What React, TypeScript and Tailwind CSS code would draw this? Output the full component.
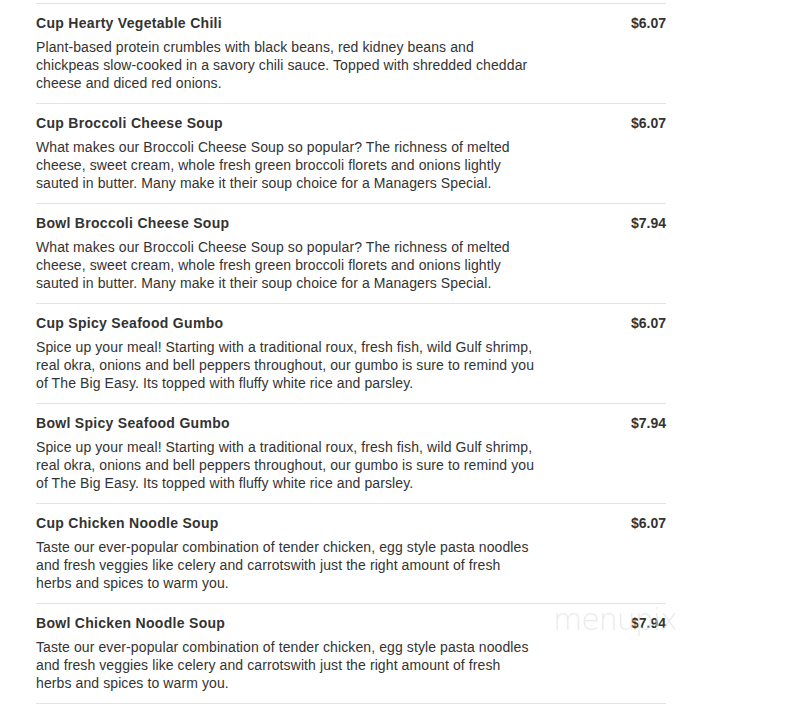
const items = [
    {
        name: "Cup Hearty Vegetable Chili",
        price: "$6.07",
        lines: [
            "Plant-based protein crumbles with black beans, red kidney beans and",
            "chickpeas slow-cooked in a savory chili sauce. Topped with shredded cheddar",
            "cheese and diced red onions.",
        ],
    },
    {
        name: "Cup Broccoli Cheese Soup",
        price: "$6.07",
        lines: [
            "What makes our Broccoli Cheese Soup so popular? The richness of melted",
            "cheese, sweet cream, whole fresh green broccoli florets and onions lightly",
            "sauted in butter. Many make it their soup choice for a Managers Special.",
        ],
    },
    {
        name: "Bowl Broccoli Cheese Soup",
        price: "$7.94",
        lines: [
            "What makes our Broccoli Cheese Soup so popular? The richness of melted",
            "cheese, sweet cream, whole fresh green broccoli florets and onions lightly",
            "sauted in butter. Many make it their soup choice for a Managers Special.",
        ],
    },
    {
        name: "Cup Spicy Seafood Gumbo",
        price: "$6.07",
        lines: [
            "Spice up your meal! Starting with a traditional roux, fresh fish, wild Gulf shrimp,",
            "real okra, onions and bell peppers throughout, our gumbo is sure to remind you",
            "of The Big Easy. Its topped with fluffy white rice and parsley.",
        ],
    },
    {
        name: "Bowl Spicy Seafood Gumbo",
        price: "$7.94",
        lines: [
            "Spice up your meal! Starting with a traditional roux, fresh fish, wild Gulf shrimp,",
            "real okra, onions and bell peppers throughout, our gumbo is sure to remind you",
            "of The Big Easy. Its topped with fluffy white rice and parsley.",
        ],
    },
    {
        name: "Cup Chicken Noodle Soup",
        price: "$6.07",
        lines: [
            "Taste our ever-popular combination of tender chicken, egg style pasta noodles",
            "and fresh veggies like celery and carrotswith just the right amount of fresh",
            "herbs and spices to warm you.",
        ],
    },
    {
        name: "Bowl Chicken Noodle Soup",
        price: "$7.94",
        lines: [
            "Taste our ever-popular combination of tender chicken, egg style pasta noodles",
            "and fresh veggies like celery and carrotswith just the right amount of fresh",
            "herbs and spices to warm you.",
        ],
    },
];

export default function App() {
    return (
        <div className="relative w-[786px] h-[707px] bg-white overflow-hidden text-[#333] font-['Liberation_Sans',Arial,sans-serif]">
            <div className="ml-[36px] w-[630px] pt-[3px]">
                {items.map((item, i) => (
                    <div key={i} className="border-t border-[#e3e3e3] pt-[9px] pb-[11px] flex justify-between">
                        <div>
                            <div className="text-[14px] leading-[20px] font-bold tracking-[0.3px]">{item.name}</div>
                            <div className="mt-[5px] text-[14px] leading-[18px] tracking-[0.1px] whitespace-nowrap">
                                {item.lines.map((l, j) => (
                                    <div key={j}>{l}</div>
                                ))}
                            </div>
                        </div>
                        <div className="text-[14px] leading-[20px] font-bold">{item.price}</div>
                    </div>
                ))}
                <div className="border-t border-[#e3e3e3]" />
            </div>

            {/* watermark */}
            <div className="absolute left-[553px] top-[603px] text-[30px] leading-[34px] tracking-[-1px] text-[#e2e2e2]/70 font-['DejaVu_Sans',sans-serif] font-extralight pointer-events-none">
                menupix
            </div>
        </div>
    );
}
